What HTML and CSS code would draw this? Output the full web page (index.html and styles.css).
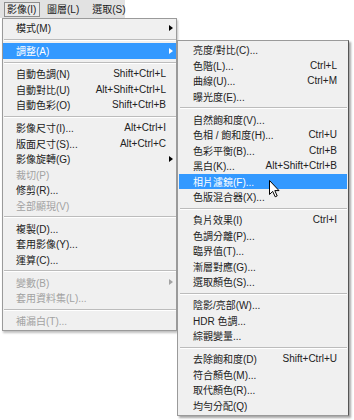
FILE: index.html
```html
<!DOCTYPE html>
<html lang="zh-TW">
<head>
  <meta charset="utf-8">
  <title>影像 選單</title>
  <link rel="stylesheet" href="styles.css">
</head>
<body>
<div class="stage">
  <div class="menubar">
    <span class="bar-item active">影像(I)</span>
    <span class="bar-item">圖層(L)</span>
    <span class="bar-item">選取(S)</span>
  </div>

  <div class="menus">
    <div class="menu main">
      <div class="item"><span>模式(M)</span><i class="sub"></i></div>
      <div class="sep"></div>
      <div class="item hot"><span>調整(A)</span><i class="sub"></i></div>
      <div class="sep"></div>
      <div class="item"><span>自動色調(N)</span><kbd>Shift+Ctrl+L</kbd></div>
      <div class="item"><span>自動對比(U)</span><kbd>Alt+Shift+Ctrl+L</kbd></div>
      <div class="item"><span>自動色彩(O)</span><kbd>Shift+Ctrl+B</kbd></div>
      <div class="sep"></div>
      <div class="item"><span>影像尺寸(I)...</span><kbd>Alt+Ctrl+I</kbd></div>
      <div class="item"><span>版面尺寸(S)...</span><kbd>Alt+Ctrl+C</kbd></div>
      <div class="item"><span>影像旋轉(G)</span><i class="sub"></i></div>
      <div class="item off"><span>裁切(P)</span></div>
      <div class="item"><span>修剪(R)...</span></div>
      <div class="item off"><span>全部顯現(V)</span></div>
      <div class="sep"></div>
      <div class="item"><span>複製(D)...</span></div>
      <div class="item"><span>套用影像(Y)...</span></div>
      <div class="item"><span>運算(C)...</span></div>
      <div class="sep"></div>
      <div class="item off"><span>變數(B)</span><i class="sub"></i></div>
      <div class="item off"><span>套用資料集(L)...</span></div>
      <div class="sep"></div>
      <div class="item off"><span>補漏白(T)...</span></div>
    </div>

    <div class="menu submenu">
      <div class="item"><span>亮度/對比(C)...</span></div>
      <div class="item"><span>色階(L)...</span><kbd>Ctrl+L</kbd></div>
      <div class="item"><span>曲線(U)...</span><kbd>Ctrl+M</kbd></div>
      <div class="item"><span>曝光度(E)...</span></div>
      <div class="sep"></div>
      <div class="item"><span>自然飽和度(V)...</span></div>
      <div class="item"><span>色相 / 飽和度(H)...</span><kbd>Ctrl+U</kbd></div>
      <div class="item"><span>色彩平衡(B)...</span><kbd>Ctrl+B</kbd></div>
      <div class="item"><span>黑白(K)...</span><kbd>Alt+Shift+Ctrl+B</kbd></div>
      <div class="item hot"><span>相片濾鏡(F)...</span></div>
      <div class="item"><span>色版混合器(X)...</span></div>
      <div class="sep"></div>
      <div class="item"><span>負片效果(I)</span><kbd>Ctrl+I</kbd></div>
      <div class="item"><span>色調分離(P)...</span></div>
      <div class="item"><span>臨界值(T)...</span></div>
      <div class="item"><span>漸層對應(G)...</span></div>
      <div class="item"><span>選取顏色(S)...</span></div>
      <div class="sep"></div>
      <div class="item"><span>陰影/亮部(W)...</span></div>
      <div class="item"><span>HDR 色調...</span></div>
      <div class="item"><span>綜觀變量...</span></div>
      <div class="sep"></div>
      <div class="item"><span>去除飽和度(D)</span><kbd>Shift+Ctrl+U</kbd></div>
      <div class="item"><span>符合顏色(M)...</span></div>
      <div class="item"><span>取代顏色(R)...</span></div>
      <div class="item"><span>均勻分配(Q)</span></div>

      <svg class="cursor" width="12" height="18" viewBox="0 0 12 18">
        <path d="M0.5 0.5 L0.5 14.5 L3.7 11.4 L6.2 16.8 L8.2 15.9 L5.8 10.6 L10 10.6 Z" fill="#fff" stroke="#000" stroke-width="1"/>
      </svg>
    </div>
  </div>
</div>
</body>
</html>
```

FILE: styles.css
```css
body {
    margin: 0;
    background-color: #fff;
    font-family: "Liberation Sans", "Noto Sans CJK TC", sans-serif;
    font-size: 10px;
    color: #222;
}

.stage {
    width: 354px;
    height: 420px;
    overflow: hidden;
}

.menubar {
    display: flex;
    align-items: center;
    gap: 4px;
    box-sizing: border-box;
    width: 125px;
    height: 18px;
    padding-left: 4px;
    background-color: #e2e2e2;
}

.bar-item {
    box-sizing: border-box;
    height: 15px;
    line-height: 13px;
    padding: 0 5px 0 2px;
    border: solid 1px transparent;
    white-space: nowrap;
}

.bar-item.active {
    width: 36px;
    border-color: #8e8e8e;
    background-color: #e9e9e9;
}

.menus {
    display: flex;
    align-items: flex-start;
}

.menu {
    box-sizing: border-box;
    border: solid 1px #9a9a9a;
    background-color: #f0f0f0;
}

.main {
    width: 175px;
    margin-left: 2px;
    padding: 1px 0;
    box-shadow: 1px 2px 2px rgba(0, 0, 0, 0.25);
}

.submenu {
    position: relative;
    width: 172px;
    margin-top: 22px;
    padding: 1px 1px 2px;
    border-right-color: #555;
    box-shadow: 2px 2px 2px rgba(0, 0, 0, 0.35);
}

.item {
    display: flex;
    align-items: center;
    height: 15.5px;
    padding-left: 13px;
    white-space: nowrap;
}

.submenu .item {
    padding-left: 14px;
}

.item span {
    flex: 1;
}

.item kbd {
    font-family: inherit;
    font-size: inherit;
    padding-right: 1px;
}

.item::after {
    content: "";
    width: 9px;
}

.item .sub {
    width: 0;
    height: 0;
    margin-right: -9px;
    margin-left: 3px;
    border-left: solid 4px #000;
    border-top: solid 3.5px transparent;
    border-bottom: solid 3.5px transparent;
    transform: translateX(-3px);
}

.item.hot {
    background-color: #3399ff;
    color: #fff;
}

.item.hot .sub {
    border-left-color: #fff;
}

.item.off {
    color: #a2a2a2;
}

.item.off .sub {
    border-left-color: #a2a2a2;
}

.sep {
    margin: 3px 0 2.5px 1px;
    border-top: solid 1px #bcbcbc;
    border-bottom: solid 1px #fff;
}

.cursor {
    position: absolute;
    left: 91px;
    top: 139px;
}
```
